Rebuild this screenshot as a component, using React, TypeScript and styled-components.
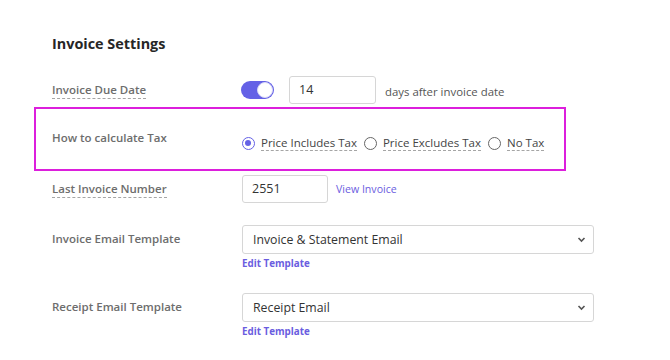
import * as React from "react";
import styled, { createGlobalStyle } from "styled-components";

const purple = "#6461e6";

const GlobalStyle = createGlobalStyle`
  body {
    margin: 0;
    background: #fff;
    font-family: "Open Sans", "Liberation Sans", sans-serif;
  }
`;

const Page = styled.div`
  width: 670px;
  height: 360px;
  box-sizing: border-box;
  padding: 34px 0 0 34px;
  overflow: hidden;
`;

const Title = styled.h2`
  margin: 0 0 22px 18px;
  font-size: 14.4px;
  line-height: 20px;
  font-weight: 700;
  color: #262626;
`;

const Row = styled.div<{ $top?: number }>`
  display: flex;
  align-items: flex-start;
  padding-left: 18px;
  margin-top: ${(p) => p.$top ?? 0}px;
`;

const Label = styled.div<{ $dotted?: boolean; $offset?: number }>`
  width: 190px;
  flex-shrink: 0;
  font-size: 11.5px;
  font-weight: 600;
  color: #6d6d6d;
  line-height: 18px;
  padding-top: ${(p) => p.$offset ?? 5}px;

  > span {
    border-bottom: ${(p) => (p.$dotted ? "1px dashed #a5a5a5" : "none")};
    padding-bottom: 1px;
  }
`;

const Field = styled.div`
  display: flex;
  align-items: center;
  height: 28px;
`;

const Toggle = styled.div`
  width: 33px;
  height: 18px;
  border-radius: 9px;
  background: ${purple};
  position: relative;
  margin-left: -1px;
  margin-right: 15px;

  &::after {
    content: "";
    position: absolute;
    right: 1px;
    top: 1px;
    width: 14px;
    height: 14px;
    border-radius: 50%;
    background: #fff;
    border: 1px solid #d8d7f7;
  }
`;

const TextInput = styled.div<{ $w: number }>`
  width: ${(p) => p.$w}px;
  height: 28px;
  box-sizing: border-box;
  border: 1px solid #d6d6d6;
  border-radius: 3px;
  padding: 0 9px;
  font-size: 12.5px;
  line-height: 26px;
  color: #333;
`;

const Hint = styled.span`
  margin-left: 9px;
  font-size: 11.4px;
  color: #555;
  padding-top: 2px;
`;

const Link = styled.span`
  margin-left: 8px;
  font-size: 10.6px;
  color: #6a5de0;
`;

const Highlight = styled.div`
  margin-top: 3px;
  width: 532px;
  height: 64px;
  box-sizing: border-box;
  border: 2px solid #dc1fdc;
  padding: 20px 0 0 16px;
  display: flex;
  align-items: flex-start;
`;

const RadioGroup = styled.div`
  display: flex;
  align-items: center;
  margin-top: 5px;
  height: 18px;
`;

const RadioOption = styled.label`
  display: flex;
  align-items: center;
  margin-right: 7px;
  font-size: 11.5px;
  color: #444;
  cursor: pointer;
`;

const RadioDot = styled.span<{ $checked?: boolean }>`
  width: 13px;
  height: 13px;
  box-sizing: border-box;
  border-radius: 50%;
  border: 1.5px solid ${(p) => (p.$checked ? purple : "#666")};
  margin-right: 6px;
  position: relative;

  &::after {
    content: "";
    display: ${(p) => (p.$checked ? "block" : "none")};
    position: absolute;
    left: 2px;
    top: 2px;
    width: 6px;
    height: 6px;
    border-radius: 50%;
    background: ${purple};
  }
`;

const RadioText = styled.span`
  border-bottom: 1px dashed #a5a5a5;
  line-height: 14px;
`;

const SelectColumn = styled.div`
  display: flex;
  flex-direction: column;
`;

const SelectBox = styled.div`
  position: relative;
  width: 352px;
  height: 29px;
  box-sizing: border-box;
  border: 1px solid #d6d6d6;
  border-radius: 3px;
  padding: 0 10px;
  font-size: 12.3px;
  line-height: 27px;
  color: #333;

  > svg {
    position: absolute;
    right: 7px;
    top: 10px;
  }
`;

const EditLink = styled.span`
  margin-top: 3px;
  font-size: 9.8px;
  font-weight: 700;
  line-height: 14px;
  color: #6a5de0;
`;

const Chevron = () => (
  <svg width="9" height="7" viewBox="0 0 9 7">
    <path d="M1.5 2 L4.5 5 L7.5 2" fill="none" stroke="#555" strokeWidth="1.6" />
  </svg>
);

const radios = [
  { label: "Price Includes Tax", checked: true },
  { label: "Price Excludes Tax", checked: false },
  { label: "No Tax", checked: false },
];

export default function App() {
  return (
    <>
      <GlobalStyle />
      <Page>
        <Title>Invoice Settings</Title>

        <Row>
          <Label $dotted>
            <span>Invoice Due Date</span>
          </Label>
          <Field>
            <Toggle />
            <TextInput $w={87}>14</TextInput>
            <Hint>days after invoice date</Hint>
          </Field>
        </Row>

        <Highlight>
          <Label $offset={0}>How to calculate Tax</Label>
          <RadioGroup>
            {radios.map((r) => (
              <RadioOption key={r.label}>
                <RadioDot $checked={r.checked} />
                <RadioText>{r.label}</RadioText>
              </RadioOption>
            ))}
          </RadioGroup>
        </Highlight>

        <Row $top={4}>
          <Label $dotted>
            <span>Last Invoice Number</span>
          </Label>
          <Field>
            <TextInput $w={86}>2551</TextInput>
            <Link>View Invoice</Link>
          </Field>
        </Row>

        <Row $top={22}>
          <Label>Invoice Email Template</Label>
          <SelectColumn>
            <SelectBox>
              Invoice &amp; Statement Email
              <Chevron />
            </SelectBox>
            <EditLink>Edit Template</EditLink>
          </SelectColumn>
        </Row>

        <Row $top={22}>
          <Label>Receipt Email Template</Label>
          <SelectColumn>
            <SelectBox>
              Receipt Email
              <Chevron />
            </SelectBox>
            <EditLink>Edit Template</EditLink>
          </SelectColumn>
        </Row>
      </Page>
    </>
  );
}
